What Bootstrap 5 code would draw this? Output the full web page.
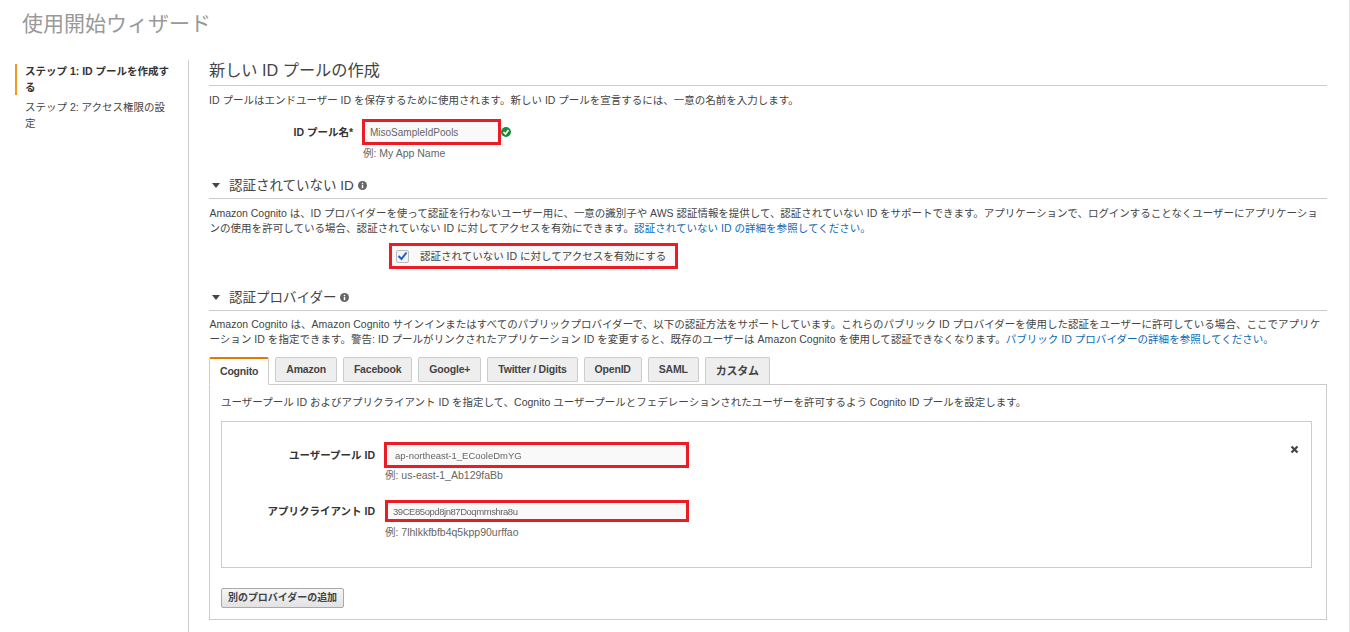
<!DOCTYPE html>
<html lang="ja"><head><meta charset="utf-8"><title>使用開始ウィザード</title>
<link href="https://cdn.jsdelivr.net/npm/bootstrap@5.3.0/dist/css/bootstrap.min.css" rel="stylesheet">
<style>
html,body{height:632px;overflow:hidden;background:#fff}
body{font-family:"Liberation Sans","Noto Sans CJK JP",sans-serif;font-size:10.5px;line-height:15px;color:#444;position:relative}
.edge-line{position:absolute;right:0;top:0;bottom:0;width:1px;background:#e6e6e6}
.wiz-title{font-size:21px;line-height:26px;color:#999;font-weight:400;margin:0;padding:11px 0 0 22px;height:60px}
.wiz-body{height:572px}
.wiz-side{width:189px;flex:none;padding:4px 0 0 15px;border-right:1px solid #ccc;margin:0}
.step-item{width:158px;margin-bottom:5px;line-height:15.5px}
.step-on{border-left:2px solid #f29a1f;padding-left:8px;font-weight:700;color:#333}
.step-off{padding-left:10px}
.wiz-main{width:1118px;margin-left:20px;flex:none}
.main-head{font-size:16.2px;line-height:20px;color:#444;font-weight:400;margin:0;height:26px;border-bottom:1px solid #ccc}
.lead-line{margin:7px 0 0;height:15px}
.form-line{display:flex;align-items:center}
.lbl{font-weight:700;color:#333;text-align:right;flex:none}
.red-box{border:3px solid #ed1c24;background:#f9f9f9;display:flex;align-items:center;flex:none}
.pool-val{font-size:10px;color:#666}
.hint{color:#666}
.sec-head{display:flex;align-items:center;font-size:13.5px;line-height:18px;color:#444;border-bottom:1px solid #ccc;height:22px;font-weight:400;margin:0;padding:0 0 4px 3px}
.tri{width:0;height:0;border-left:4px solid transparent;border-right:4px solid transparent;border-top:5px solid #444;margin-right:9px}
.info-ic{margin-left:4px}
.para{margin:0;line-height:15px;padding:0 3px 0 .5px;letter-spacing:.03px}
.para-tight::first-line{letter-spacing:-.025px}
.para a{color:#0b6bb5;text-decoration:none}
.tab-row{display:flex;gap:6px;height:28px;align-items:flex-end;position:relative;z-index:1}
.tab-it{height:25px;margin-bottom:2px;background:#eee;border:1px solid #ccc;font-weight:700;color:#444;padding:0 10px;display:flex;align-items:center;border-radius:2px 2px 0 0;font-size:10.5px;letter-spacing:-.2px}
.tab-on{height:28px;margin:0 0 -1px;background:#fff;border-top:2px solid #e07b00;border-bottom:1px solid #fff}
.tab-last{height:27px;margin:0;border-bottom:0;font-size:11px}
.tab-pane-box{border:1px solid #ccc;height:236px;padding:10px 14px 0 11px}
.prov-box{border:1px solid #ccc;height:147px;margin-top:11px;position:relative}
.del-x{position:absolute;right:12px;top:23px;line-height:0}
.add-btn{display:block;margin-top:20px;height:20px;padding:0 6px;border:1px solid #aaa;border-radius:2px;background:linear-gradient(#f6f6f6,#e2e2e2);font-size:10px;line-height:18px;font-weight:700;color:#444;letter-spacing:-.05px}
.blur-val{filter:blur(.5px);color:#666;font-size:9.5px;white-space:nowrap}
.blur-tight{letter-spacing:-.45px}
.chk-ic{width:13px;height:13px;margin-left:4px;border:1px solid #bbb;border-radius:2px;background:#f4f4f4;display:flex;align-items:center;justify-content:center;flex:none}
</style></head>
<body>
<h1 class="wiz-title">使用開始ウィザード</h1>
<div class="wiz-body d-flex">
  <nav class="wiz-side">
    <div class="step-item step-on">ステップ 1: ID プールを作成する</div>
    <div class="step-item step-off">ステップ 2: アクセス権限の設定</div>
  </nav>
  <main class="wiz-main">
    <h2 class="main-head">新しい ID プールの作成</h2>
    <p class="lead-line">ID プールはエンドユーザー ID を保存するために使用されます。新しい ID プールを宣言するには、一意の名前を入力します。</p>
    <div class="form-line" style="margin-top:11px">
      <div class="lbl" style="width:144px">ID プール名*</div>
      <div class="red-box" style="width:139px;height:26px;margin-left:9px;padding-left:5px"><span class="pool-val">MisoSampleIdPools</span></div>
      <svg width="10" height="10" viewBox="0 0 10 10"><circle cx="5" cy="5" r="5" fill="#1d8a3c"/><path d="M2.5 5l2 2 3-4" fill="none" stroke="#fff" stroke-width="1.6"/></svg>
    </div>
    <div class="hint" style="margin:1px 0 0 154px">例: My App Name</div>
    <h3 class="sec-head" style="margin-top:16px"><span class="tri"></span>認証されていない ID<svg class="info-ic" width="9" height="9" viewBox="0 0 10 10"><circle cx="5" cy="5" r="5" fill="#666"/><rect x="4.2" y="4.2" width="1.6" height="3.8" fill="#fff"/><rect x="4.2" y="2" width="1.6" height="1.5" fill="#fff"/></svg></h3>
    <p class="para para-tight" style="margin-top:7px">Amazon Cognito は、ID プロバイダーを使って認証を行わないユーザー用に、一意の識別子や AWS 認証情報を提供して、認証されていない ID をサポートできます。アプリケーションで、ログインすることなくユーザーにアプリケーションの使用を許可している場合、認証されていない ID に対してアクセスを有効にできます。<a href="#">認証されていない ID の詳細を参照してください。</a></p>
    <div style="margin:7px 0 0 180px;width:289px;height:26px" class="red-box">
      <span class="chk-ic"><svg width="11" height="10" viewBox="0 0 11 10"><path d="M1.5 5l3 3 5-6.5" fill="none" stroke="#1d62c4" stroke-width="2"/></svg></span>
      <span style="margin-left:11px">認証されていない ID に対してアクセスを有効にする</span>
    </div>
    <h3 class="sec-head" style="margin-top:20px"><span class="tri"></span>認証プロバイダー<svg class="info-ic" width="9" height="9" viewBox="0 0 10 10"><circle cx="5" cy="5" r="5" fill="#666"/><rect x="4.2" y="4.2" width="1.6" height="3.8" fill="#fff"/><rect x="4.2" y="2" width="1.6" height="1.5" fill="#fff"/></svg></h3>
    <p class="para" style="margin-top:6px">Amazon Cognito は、Amazon Cognito サインインまたはすべてのパブリックプロバイダーで、以下の認証方法をサポートしています。これらのパブリック ID プロバイダーを使用した認証をユーザーに許可している場合、ここでアプリケーション ID を指定できます。警告: ID プールがリンクされたアプリケーション ID を変更すると、既存のユーザーは Amazon Cognito を使用して認証できなくなります。<a href="#">パブリック ID プロバイダーの詳細を参照してください。</a></p>
    <div class="tab-row" style="margin-top:9px">
      <div class="tab-it tab-on">Cognito</div><div class="tab-it">Amazon</div><div class="tab-it">Facebook</div><div class="tab-it">Google+</div><div class="tab-it">Twitter / Digits</div><div class="tab-it">OpenID</div><div class="tab-it">SAML</div><div class="tab-it tab-last">カスタム</div>
    </div>
    <div class="tab-pane-box">
      <div>ユーザープール ID およびアプリクライアント ID を指定して、Cognito ユーザープールとフェデレーションされたユーザーを許可するよう Cognito ID プールを設定します。</div>
      <div class="prov-box">
        <svg class="del-x" width="9" height="9" viewBox="0 0 9 9"><path d="M1.5 1.5l6 6M7.5 1.5l-6 6" stroke="#444" stroke-width="2.2"/></svg>
        <div class="form-line" style="margin-top:20px">
          <div class="lbl" style="width:153px">ユーザープール ID</div>
          <div class="red-box" style="width:305px;height:26px;margin-left:9px;padding-left:8px"><span class="blur-val">ap-northeast-1_ECooleDmYG</span></div>
        </div>
        <div class="hint" style="margin:0 0 0 163px">例: us-east-1_Ab129faBb</div>
        <div class="form-line" style="margin-top:17px">
          <div class="lbl" style="width:153px">アプリクライアント ID</div>
          <div class="red-box" style="width:304px;height:22px;margin-left:10px;padding-left:5px"><span class="blur-val blur-tight">39CE85opd8jn87Doqmmshra8u</span></div>
        </div>
        <div class="hint" style="margin:3px 0 0 163px">例: 7lhlkkfbfb4q5kpp90urffao</div>
      </div>
      <button type="button" class="add-btn">別のプロバイダーの追加</button>
    </div>
  </main>
</div>
<div class="edge-line"></div>
</body></html>
